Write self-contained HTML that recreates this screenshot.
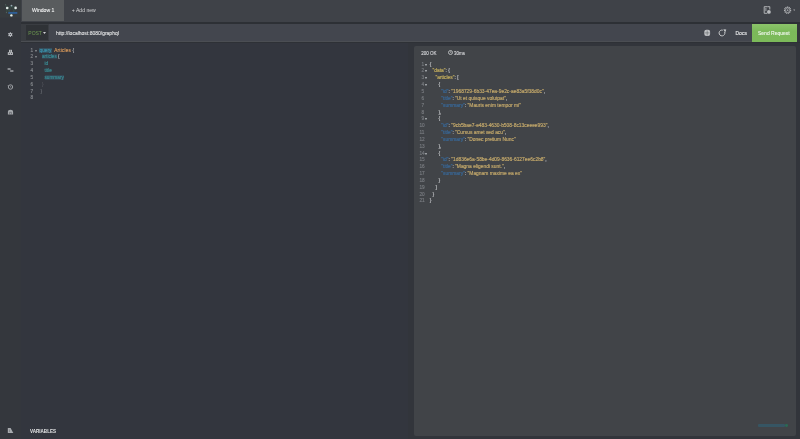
<!DOCTYPE html>
<html><head><meta charset="utf-8">
<style>
*{margin:0;padding:0;box-sizing:border-box}
html,body{width:800px;height:439px;overflow:hidden;background:#33363d;font-family:"Liberation Sans",sans-serif}
.abs{position:absolute}
#root{position:absolute;left:0;top:0;width:800px;height:439px;overflow:hidden;filter:blur(0.4px)}
#side{left:0;top:0;width:21px;height:439px;background:#34373d}
#head{left:21px;top:0;width:779px;height:22.5px;background:#3f4248}
#tab{left:22.3px;top:0;width:41.7px;height:20.8px;background:#595c5e}
.t{position:absolute;white-space:pre;line-height:1}
#band{left:21px;top:22.3px;width:779px;height:1.4px;background:#2d3035}
#url{left:21px;top:23.7px;width:775.5px;height:17.8px;background:#43464e}
#urlhl{left:21px;top:41.3px;width:775.5px;height:0.6px;background:#4b4e53}
#urlsh{left:21px;top:41.9px;width:779px;height:1.4px;background:#2e3136}
#rgut{left:796.5px;top:23.7px;width:3.5px;height:18px;background:#33373b}
#postb{left:21px;top:23.7px;width:28.2px;height:17.6px;background:#3a3d42}
#post{left:26.2px;top:25.2px;width:22px;height:15.1px;background:#2f3236}
#send{left:752px;top:23.7px;width:44.5px;height:18px;background:linear-gradient(#8cc46a,#7bb95a 40%,#7cba5a)}
#qed{left:21px;top:43.3px;width:387px;height:396px;background:#33363e}
#res{left:408px;top:43.3px;width:392px;height:396px;background:#32353b}
#resin{left:414.3px;top:46.4px;width:381.9px;height:389.2px;background:#414448;border-radius:2px}
.code{font-size:4.7px;line-height:6.85px}
.code div{white-space:pre;height:6.85px}
.code{-webkit-text-stroke:0.15px currentColor}
.ln{color:#9a9da2}
.kw{color:#3a94ae}
.def{color:#d9995a}
.prop{color:#3a8e96}
.pun{color:#b0b2b6}
.key{color:#386a9c}
.str{color:#c8ac6c}
.jkey{color:#c9b25e}
</style></head><body><div id="root">
<div id="side" class="abs"></div>
<div id="head" class="abs"></div>
<div id="tab" class="abs"></div>
<div class="t" style="left:32px;top:7.6px;font-size:5.1px;color:#eceded;-webkit-text-stroke:0.12px #eceded">Window 1</div>
<div class="t" style="left:71.8px;top:7.6px;font-size:5.1px;color:#d2d3d5">+ Add new</div>

<div id="band" class="abs"></div>
<div id="url" class="abs"></div>
<div id="urlhl" class="abs"></div>
<div id="urlsh" class="abs"></div>
<div id="rgut" class="abs"></div>
<div id="postb" class="abs"></div>
<div id="post" class="abs"></div>
<div class="t" style="left:28.3px;top:31.1px;font-size:5px;color:#6c9850">POST</div>
<svg class="abs" style="left:42.5px;top:32.3px" width="3" height="2" viewBox="0 0 3 2"><path d="M0 0H3L1.5 2Z" fill="#cfd0d2"/></svg>
<div class="t" style="left:56px;top:31.1px;font-size:5px;color:#e2e3e4;-webkit-text-stroke:0.1px #e2e3e4">http://localhost:8080/graphql</div>


<div class="t" style="left:735.5px;top:31.1px;font-size:5px;color:#e2e3e4;-webkit-text-stroke:0.15px #e2e3e4">Docs</div>
<div id="send" class="abs"></div>
<div class="t" style="left:758px;top:31.1px;font-size:5px;color:#eef6ea;-webkit-text-stroke:0.12px #eef6ea">Send Request</div>

<!-- query editor -->
<div id="qed" class="abs"></div>
<div class="abs code" style="left:30.5px;top:47.5px;color:#85888d">
<div>1</div><div>2</div><div>3</div><div>4</div><div>5</div><div>6</div><div>7</div><div>8</div>
</div>
<div class="abs code" style="left:34.5px;top:47.5px;color:#8a8d92;font-size:4.2px">
<div>▾</div><div>▾</div>
</div>
<div class="abs code" style="left:39.3px;top:47.5px">
<div><span class="kw" style="background:rgba(60,130,155,0.35);padding:0 0.3px">query</span> <span class="def" style="margin-left:1.2px;letter-spacing:0.2px">Articles</span> <span class="pun">{</span></div>
<div>  <span class="prop" style="background:rgba(60,110,140,0.22)">articles</span> <span class="pun">{</span></div>
<div>    <span class="prop">id</span></div>
<div>    <span class="prop">title</span></div>
<div>    <span class="prop" style="background:rgba(60,120,150,0.25)">summary</span></div>
<div>  <span class="pun" style="color:#50535a">}</span></div>
<div><span class="pun" style="color:#6a6d73;margin-left:1.2px">}</span></div>
<div> </div>
</div>

<!-- variables -->

<div class="t" style="left:29.8px;top:428.1px;font-size:6px;font-weight:bold;color:#e6e7e8;transform:scaleX(0.76);transform-origin:0 0">VARIABLES</div>

<!-- divider handle -->
<div class="abs" style="left:408.5px;top:232.3px;width:1.9px;height:16.8px;background:#6c6f74;border-radius:0.9px"></div>

<!-- result pane -->
<div id="res" class="abs"></div>
<div id="resin" class="abs"></div>
<div class="t" style="left:421.3px;top:51.5px;font-size:4.5px;color:#dcdde0;-webkit-text-stroke:0.1px #dcdde0">200 OK</div>
<svg class="abs" style="left:447.5px;top:50px" width="5" height="5" viewBox="0 0 5 5">
  <circle cx="2.5" cy="2.5" r="2" stroke="#d0d2d4" stroke-width="0.8" fill="none"/>
  <path d="M2.5 1.3 V2.6 H3.4" stroke="#d0d2d4" stroke-width="0.6" fill="none"/>
</svg>
<div class="t" style="left:454px;top:51.5px;font-size:4.5px;color:#dcdde0;-webkit-text-stroke:0.1px #dcdde0">30ms</div>

<div class="abs code" style="left:419.5px;top:61.6px;color:#797c81;text-align:right;width:4.6px">
<div>1</div><div>2</div><div>3</div><div>4</div><div>5</div><div>6</div><div>7</div><div>8</div><div>9</div><div>10</div><div>11</div><div>12</div><div>13</div><div>14</div><div>15</div><div>16</div><div>17</div><div>18</div><div>19</div><div>20</div><div>21</div>
</div>
<div class="abs code" style="left:425.3px;top:61.6px;color:#b0b2b6;font-size:4.2px">
<div>▾</div><div>▾</div><div>▾</div><div>▾</div><div> </div><div> </div><div> </div><div> </div><div>▾</div><div> </div><div> </div><div> </div><div> </div><div>▾</div>
</div>
<div class="abs code" style="left:429.7px;top:61.6px;color:#c4c6c9;font-size:4.9px">
<div style="padding-left:0.0px">{</div>
<div style="padding-left:2.9px"><span class="jkey">"data"</span>: {</div>
<div style="padding-left:5.8px"><span class="jkey">"articles"</span>: [</div>
<div style="padding-left:8.7px">{</div>
<div style="padding-left:11.6px"><span class="key">"id"</span>: <span class="str">"1968729-6b33-47ea-9e2c-ae83a5f38d0c"</span>,</div>
<div style="padding-left:11.6px"><span class="key">"title"</span>: <span class="str">"Ut et quisque volutpat"</span>,</div>
<div style="padding-left:11.6px"><span class="key">"summary"</span>: <span class="str">"Mauris enim tempor mi"</span></div>
<div style="padding-left:8.7px">},</div>
<div style="padding-left:8.7px">{</div>
<div style="padding-left:11.6px"><span class="key">"id"</span>: <span class="str">"9cb5bae7-e483-4630-b508-8c13ceeee993"</span>,</div>
<div style="padding-left:11.6px"><span class="key">"title"</span>: <span class="str">"Cursus amet sed acu"</span>,</div>
<div style="padding-left:11.6px"><span class="key">"summary"</span>: <span class="str">"Donec pretium Nunc"</span></div>
<div style="padding-left:8.7px">},</div>
<div style="padding-left:8.7px">{</div>
<div style="padding-left:11.6px"><span class="key">"id"</span>: <span class="str">"1d836e6a-58be-4d09-8636-6127ee6c2b8"</span>,</div>
<div style="padding-left:11.6px"><span class="key">"title"</span>: <span class="str">"Magna eligendi sunt."</span>,</div>
<div style="padding-left:11.6px"><span class="key">"summary"</span>: <span class="str">"Magnam maxime ea ex"</span></div>
<div style="padding-left:8.7px">}</div>
<div style="padding-left:5.8px">]</div>
<div style="padding-left:2.9px">}</div>
<div style="padding-left:0.0px">}</div>
</div>

<div class="abs" style="left:757.5px;top:424.2px;width:27px;height:2.4px;background:#335a6a;border-radius:1px;opacity:0.8"></div><div class="abs" style="left:784.5px;top:424px;width:3px;height:2.8px;background:#2a6a55;border-radius:1.4px"></div>
<!-- icons overlay -->
<svg class="abs" style="left:0;top:0;z-index:5" width="800" height="439" viewBox="0 0 800 439">
  <!-- logo -->
  <rect x="0" y="0" width="21" height="17.8" fill="#373b3e"/>
  <g stroke="#35574c" stroke-width="0.6" fill="none">
    <path d="M11.5 5.6 L8.6 12.8 M11.5 5.6 L14.4 12.8 M7.1 8 L11.5 5.6 L15.7 8 M7.1 8 L11.3 15.3 L15.7 8 M5.6 4.7 L7.1 8 L6.4 12.6"/>
  </g>
  <path d="M8.3 12.9 H17.3" stroke="#2f5e96" stroke-width="1.9"/>
  <circle cx="7.2" cy="8" r="1.3" fill="#e2ece8"/>
  <circle cx="15.6" cy="7.9" r="1.3" fill="#e2ece8"/>
  <circle cx="11.5" cy="5.6" r="0.9" fill="#9aa8b2"/>
  <circle cx="11.4" cy="15.4" r="1.2" fill="#e2ece8"/>
  <circle cx="5.6" cy="4.7" r="0.55" fill="#5d6b67"/>
  <circle cx="6.4" cy="12.6" r="0.55" fill="#5d6b67"/>
  <!-- url icons -->
  <rect x="704.3" y="29.8" width="5.8" height="6.3" rx="2" fill="#c0c2c5"/>
  <path d="M707.2 30.5 V35.5 M704.8 32.9 H709.6" stroke="#5a5d62" stroke-width="0.55"/>
  <path d="M724.7 32 A2.9 2.9 0 1 1 722.75 30.2" stroke="#c6c8ca" stroke-width="1" fill="none"/>
  <path d="M723.3 29.2 L726.3 29.6 L725.2 32.4 Z" fill="#c6c8ca"/>
  <!-- header icons -->
  <path d="M767.5 6.7 H764.2 V13.3 H767" stroke="#b0b2b5" stroke-width="1" fill="none"/>
  <path d="M767.5 6.7 H769.8 V9.5" stroke="#b0b2b5" stroke-width="1" fill="none"/>
  <path d="M765.9 7.8 V11.2" stroke="#d0d2d4" stroke-width="0.7"/>
  <circle cx="768.9" cy="11.9" r="1.9" fill="#b8babd"/>
  <g transform="translate(787.6 10.2)">
    <circle r="3" stroke="#b0b2b5" stroke-width="1.3" fill="none" stroke-dasharray="1.1 0.55"/>
    <circle r="2.2" stroke="#b0b2b5" stroke-width="0.6" fill="none"/>
    <circle r="0.9" fill="#9a9ca0"/>
  </g>
  <path d="M793.2 9.6 H795.2 L794.2 10.9 Z" fill="#a8aaad"/>
  <!-- gear -->
  <g transform="translate(10.35 34.6)">
    <circle r="1.7" fill="#bfc2c7"/>
    <path d="M0 -2.35 V2.35 M-2.05 -1.18 L2.05 1.18 M-2.05 1.18 L2.05 -1.18" stroke="#bfc2c7" stroke-width="1"/>
    <circle r="0.6" fill="#34373d"/>
  </g>
  <!-- group/lock-like -->
  <rect x="9" y="49.8" width="3" height="2.6" fill="#b8bbbe"/>
  <rect x="7.8" y="52.2" width="5.2" height="2.7" fill="#b8bbbe"/>
  <circle cx="10.5" cy="51.1" r="0.5" fill="#34373d"/>
  <circle cx="9.3" cy="53.6" r="0.5" fill="#34373d"/>
  <circle cx="11.6" cy="53.6" r="0.5" fill="#34373d"/>
  <!-- exchange -->
  <path d="M7.6 69.1 H10.6 M10.2 70.9 H13.4" stroke="#a3a6aa" stroke-width="1.5"/>
  <path d="M10.2 69.3 L11.5 70.4" stroke="#74777c" stroke-width="0.7"/>
  <!-- history -->
  <circle cx="10.5" cy="87" r="2.2" stroke="#9c9fa3" stroke-width="1" fill="none"/>
  <path d="M10.5 85.8 V87.2 H11.5" stroke="#9c9fa3" stroke-width="0.6" fill="none"/>
  <!-- arch -->
  <path d="M7.9 114.4 V112 A2.6 2.3 0 0 1 13.1 112 V114.4 Z" fill="#a5a8ac"/>
  <path d="M9.6 114.4 V112.3 H11.4 V114.4" stroke="#55585d" stroke-width="0.6" fill="none"/>
  <!-- history arrow notch -->
  <path d="M7.6 85.2 L8.9 85.6 L8.2 86.7 Z" fill="#9c9fa3"/>
  <!-- variables icon -->
  <path d="M7.8 428.1 H10.6 L13.3 432.9 H7.8 Z" fill="#a8abaf"/>
  <path d="M9.5 429.5 V432" stroke="#6e7175" stroke-width="0.6"/>
</svg>
</div></body></html>
